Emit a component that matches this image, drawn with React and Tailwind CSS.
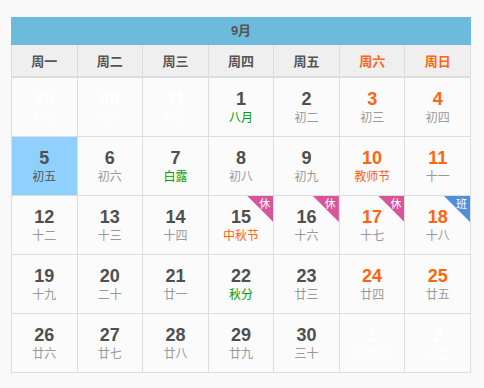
import React from "react";

const weekdays = ["周一", "周二", "周三", "周四", "周五", "周六", "周日"];

// t: "other" = other month, c: lunar colour, b: badge
const rows = [
  [
    { d: 29, l: "廿七", t: "other" },
    { d: 30, l: "廿八", t: "other" },
    { d: 31, l: "廿九", t: "other" },
    { d: 1, l: "八月", c: "green" },
    { d: 2, l: "初二" },
    { d: 3, l: "初三" },
    { d: 4, l: "初四" },
  ],
  [
    { d: 5, l: "初五", t: "today" },
    { d: 6, l: "初六" },
    { d: 7, l: "白露", c: "green" },
    { d: 8, l: "初八" },
    { d: 9, l: "初九" },
    { d: 10, l: "教师节", c: "orange" },
    { d: 11, l: "十一" },
  ],
  [
    { d: 12, l: "十二" },
    { d: 13, l: "十三" },
    { d: 14, l: "十四" },
    { d: 15, l: "中秋节", c: "orange", b: "休" },
    { d: 16, l: "十六", b: "休" },
    { d: 17, l: "十七", b: "休" },
    { d: 18, l: "十八", b: "班" },
  ],
  [
    { d: 19, l: "十九" },
    { d: 20, l: "二十" },
    { d: 21, l: "廿一" },
    { d: 22, l: "秋分", c: "green" },
    { d: 23, l: "廿三" },
    { d: 24, l: "廿四" },
    { d: 25, l: "廿五" },
  ],
  [
    { d: 26, l: "廿六" },
    { d: 27, l: "廿七" },
    { d: 28, l: "廿八" },
    { d: 29, l: "廿九" },
    { d: 30, l: "三十" },
    { d: 1, l: "国庆节", t: "other" },
    { d: 2, l: "初二", t: "other" },
  ],
];

const DayCell = ({ day, col }) => {
  const weekend = col >= 5;
  const other = day.t === "other";
  const today = day.t === "today";

  let numColor = weekend ? "text-[#ff6410]" : "text-[#4f4f4f]";
  let lunarColor = "text-[#999999]";
  if (day.c === "green") lunarColor = "text-[#009a00]";
  if (day.c === "orange") lunarColor = "text-[#ff6410]";
  if (today) lunarColor = "text-[#555555]";
  if (other) {
    numColor = "text-white";
    lunarColor = "text-white";
  }

  return (
    <div
      className={`relative h-[59px] border-r border-b border-[#dddddd] flex flex-col items-center justify-center ${
        today ? "bg-[#8fd0ff]" : "bg-[#fbfbfb]"
      }`}
    >
      {day.b && (
        <>
          <div
            className={`absolute top-0 right-0 w-[26px] h-[26px] [clip-path:polygon(0_0,100%_0,100%_100%)] ${
              day.b === "班" ? "bg-[#4f8fde]" : "bg-[#d6559b]"
            }`}
          />
          <span className="absolute top-[1px] right-[3px] text-[11px] leading-[12px] text-white font-['Noto_Sans_CJK_SC',sans-serif]">
            {day.b}
          </span>
        </>
      )}
      <span
        className={`text-[18px] leading-[20px] font-bold font-['Liberation_Sans',Arial,sans-serif] ${numColor}`}
      >
        {day.d}
      </span>
      <span
        className={`text-[12px] leading-[16px] mb-[1px] font-['Noto_Sans_CJK_SC',sans-serif] ${lunarColor}`}
      >
        {day.l}
      </span>
    </div>
  );
};

export default function App() {
  return (
    <div className="w-[484px] h-[388px] bg-[#f9f9f9] pt-[17px] pl-[11px]">
      <div className="w-[460px]">
        <div className="h-[28px] bg-[#6cbbdc] flex items-center justify-center text-[13px] font-bold text-[#555555] font-['Liberation_Sans','Noto_Sans_CJK_SC',sans-serif]">
          9月
        </div>
        <div className="grid grid-cols-7 border-l border-[#dddddd]">
          {weekdays.map((w, i) => (
            <div
              key={w}
              className={`h-[33px] bg-[#efefef] border-r border-b-2 border-[#dddddd] flex items-center justify-center text-[13px] font-bold font-['Noto_Sans_CJK_SC',sans-serif] ${
                i >= 5 ? "text-[#ff6410]" : "text-[#555555]"
              }`}
            >
              {w}
            </div>
          ))}
          {rows.map((row, r) =>
            row.map((day, c) => <DayCell key={r + "-" + c} day={day} col={c} />)
          )}
        </div>
      </div>
    </div>
  );
}
